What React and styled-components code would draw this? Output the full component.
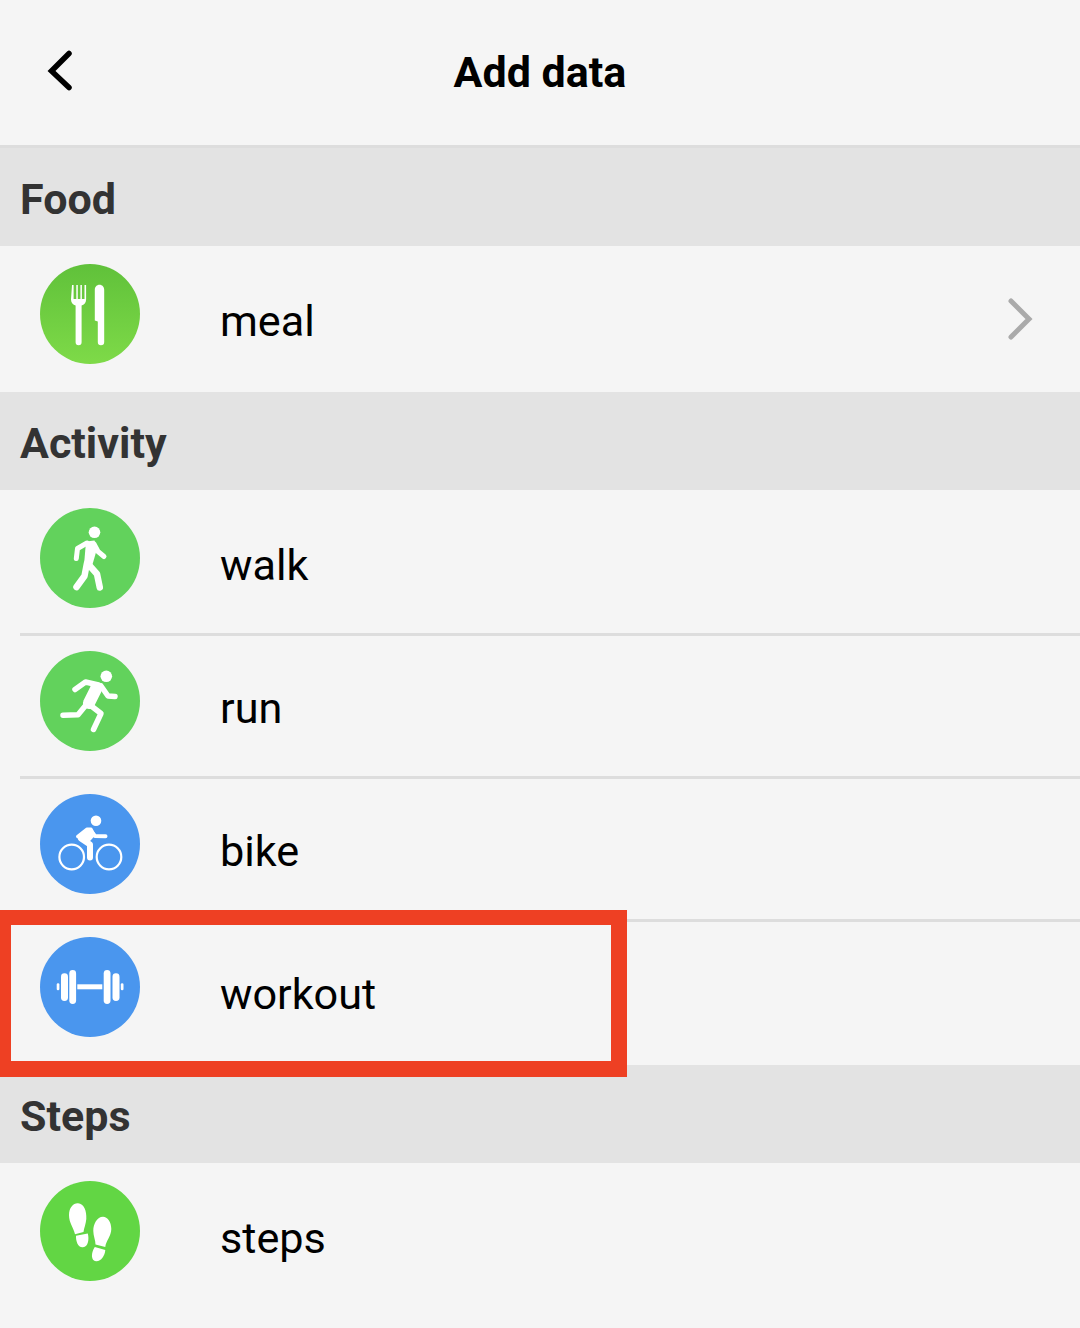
import React from "react";
import styled, { createGlobalStyle } from "styled-components";

const GlobalStyle = createGlobalStyle`
  html, body {
    margin: 0;
    padding: 0;
    background: #f5f5f5;
  }
  * {
    box-sizing: border-box;
  }
`;

const Page = styled.div`
  position: relative;
  width: 1080px;
  height: 1328px;
  overflow: hidden;
  background: #f5f5f5;
  font-family: Roboto, "Liberation Sans", sans-serif;
`;

const Header = styled.header`
  display: flex;
  align-items: center;
  justify-content: center;
  height: 148px;
  padding-bottom: 2px;
  border-bottom: 3px solid #dddddd;
  position: relative;
`;

const BackButton = styled.svg`
  position: absolute;
  left: 44px;
  top: 46px;
  width: 32px;
  height: 48px;
`;

const Title = styled.h1`
  margin: 0;
  font-size: 43px;
  font-weight: 700;
  color: #000;
`;

const SectionTitle = styled.h2`
  margin: 0;
  height: 98px;
  padding: 3px 0 0 20px;
  display: flex;
  align-items: center;
  font-size: 43px;
  font-weight: 700;
  color: #333;
  background: #e3e3e3;
`;

const Row = styled.div`
  display: flex;
  align-items: center;
  margin-left: 20px;
  height: ${(p) => p.$height}px;
  padding-left: 20px;
  padding-top: ${(p) => p.$top}px;
  padding-bottom: ${(p) => p.$bottom}px;
  border-bottom: ${(p) => (p.$divider ? "3px solid #dddddd" : "none")};
`;

const IconCircle = styled.div`
  flex: none;
  width: 100px;
  height: 100px;
  border-radius: 50%;
  background: ${(p) => p.$bg};
`;

const IconSvg = styled.svg`
  display: block;
  width: 100px;
  height: 100px;
`;

const Label = styled.span`
  margin-left: 80px;
  padding-top: 15px;
  font-size: 43.2px;
  font-weight: 400;
  color: #000;
`;

const Chevron = styled.svg`
  position: absolute;
  left: 1004px;
  top: 294px;
  width: 32px;
  height: 50px;
`;

const Highlight = styled.div`
  position: absolute;
  left: 0;
  top: 910px;
  width: 627px;
  height: 167px;
  border-style: solid;
  border-color: #ee4023;
  border-width: 15px 16px 16px 11px;
`;

function MealIcon() {
  return (
    <IconSvg viewBox="0 0 100 100">
      <path
        fill="#fff"
        d="M32 21h1.6v14h2.7V21h1.5v14h2.6V21h1.5v14h2.6V21h1.6v14.5c0 3.500-2 5.300-4.500 6V78.200a3 3 0 0 1-6 0V41.500c-2.500-.7-4.600-2.500-4.600-6z"
      />
      <path
        fill="#fff"
        d="M59.500 20.700c2.700 0 4.700 2.300 4.700 5V78a3.200 3.200 0 0 1-6.400 0V57.500l-3-1V25.700c0-2.700 2-5 4.700-5z"
      />
    </IconSvg>
  );
}

function WalkIcon() {
  return (
    <IconSvg viewBox="0 0 100 100">
      <circle cx="54.500" cy="24.300" r="5.800" fill="#fff" />
      <path fill="#fff" d="M46 33.500L54.500 32.500 57 41 52 58 44 57Z" />
      <g fill="none" stroke="#fff" strokeLinecap="round" strokeLinejoin="round">
        <path strokeWidth="5" d="M47 35L37.500 40.500l-1.200 10" />
        <path strokeWidth="5" d="M54 36L58 43.500l6 5" />
        <path strokeWidth="6.500" d="M47 55L44.500 68l-8 11" />
        <path strokeWidth="6.500" d="M49 57l8 9 2.800 13.500" />
      </g>
    </IconSvg>
  );
}

function RunIcon() {
  return (
    <IconSvg viewBox="0 0 100 100">
      <circle cx="66.300" cy="25.300" r="5.800" fill="#fff" />
      <g fill="none" stroke="#fff" strokeLinecap="round" strokeLinejoin="round">
        <path strokeWidth="5.500" d="M35 38.500l10.500-7.500 13 3" />
        <path strokeWidth="5.500" d="M61 35l7 10 7 .5" />
        <path strokeWidth="12" d="M56 38l-7 14" />
        <path strokeWidth="5.500" d="M46 54l-8 9.800-15 .4" />
        <path strokeWidth="5.500" d="M50 54l11 8.500-7.500 16" />
      </g>
    </IconSvg>
  );
}

function BikeIcon() {
  return (
    <IconSvg viewBox="0 0 100 100">
      <circle cx="56" cy="26.700" r="5.300" fill="#fff" />
      <circle cx="31.700" cy="63" r="12.300" fill="none" stroke="#fff" strokeWidth="2.200" />
      <circle cx="69" cy="63" r="12.300" fill="none" stroke="#fff" strokeWidth="2.200" />
      <path
        fill="#fff"
        stroke="#fff"
        strokeWidth="3"
        strokeLinejoin="round"
        d="M47 35L51 35 54 40.500 49 46 42 45.500 37.500 42.500Z"
      />
      <g fill="none" stroke="#fff" strokeLinecap="round" strokeLinejoin="round">
        <path strokeWidth="6" d="M41 44.500l9 6v13" />
        <path strokeWidth="4" d="M50 36l5 6 10.500 .2" />
      </g>
    </IconSvg>
  );
}

function WorkoutIcon() {
  return (
    <IconSvg viewBox="0 0 100 100">
      <g fill="#fff">
        <rect x="37.300" y="47.300" width="25" height="5" />
        <rect x="29.300" y="33" width="6.800" height="34" rx="3.400" />
        <rect x="63.700" y="33" width="6.800" height="34" rx="3.400" />
        <rect x="21" y="36.300" width="7" height="27.700" rx="3.400" />
        <rect x="72.500" y="36.300" width="7" height="27.700" rx="3.400" />
        <rect x="16.700" y="46.300" width="2.700" height="7" rx="1.300" />
        <rect x="80.800" y="46.300" width="2.700" height="7" rx="1.300" />
      </g>
    </IconSvg>
  );
}

function StepsIcon() {
  return (
    <IconSvg viewBox="0 0 100 100">
      <g fill="#fff">
        <path d="M29 34C29 26.500 33.500 22 38 22.300 44 22.800 46.800 30 46.300 38 45.900 43 44 47 43.500 51L35 53.300C33.500 46.500 29 42 29 34Z" />
        <path d="M36 54.800L47.800 52.500C49.300 58 48.300 65.800 43 66.300 37.800 66.800 35.800 60 36 54.800Z" />
        <path d="M71.300 48C71.300 41 67.500 35.800 63 35.800 57 35.800 53.300 43 53.300 50 53.300 55 55.500 59 55.500 63.500L65.300 66C65.800 60 71.300 55 71.300 48Z" />
        <path d="M54.800 66L65.300 69C64.800 75 61 80.500 56 80.200 50.800 79.800 50.800 72 54.800 66Z" />
      </g>
    </IconSvg>
  );
}

const sections = [
  {
    title: "Food",
    rows: [
      {
        label: "meal",
        icon: <MealIcon />,
        bg: "linear-gradient(180deg, #60c13a 0%, #7eda48 100%)",
        height: 146,
        top: 18,
        bottom: 28,
      },
    ],
  },
  {
    title: "Activity",
    rows: [
      { label: "walk", icon: <WalkIcon />, bg: "#62d25c", height: 146, top: 18, bottom: 25, divider: true },
      { label: "run", icon: <RunIcon />, bg: "#62d25c", height: 143, top: 15, bottom: 25, divider: true },
      { label: "bike", icon: <BikeIcon />, bg: "#4a96ee", height: 143, top: 15, bottom: 25, divider: true },
      { label: "workout", icon: <WorkoutIcon />, bg: "#4a96ee", height: 143, top: 15, bottom: 28 },
    ],
  },
  {
    title: "Steps",
    rows: [
      { label: "steps", icon: <StepsIcon />, bg: "#62d644", height: 165, top: 18, bottom: 47 },
    ],
  },
];

export default function App() {
  return (
    <Page>
      <GlobalStyle />
      <Header>
        <BackButton viewBox="0 0 32 48">
          <path
            d="M25 7.500L7.500 25 25 41.500"
            fill="none"
            stroke="#000"
            strokeWidth="5.500"
            strokeLinecap="round"
            strokeLinejoin="miter"
          />
        </BackButton>
        <Title>Add data</Title>
      </Header>
      {sections.map((section) => (
        <section key={section.title}>
          <SectionTitle>{section.title}</SectionTitle>
          {section.rows.map((row) => (
            <Row
              key={row.label}
              $height={row.height}
              $top={row.top}
              $bottom={row.bottom}
              $divider={row.divider}
            >
              <IconCircle $bg={row.bg}>{row.icon}</IconCircle>
              <Label>{row.label}</Label>
            </Row>
          ))}
        </section>
      ))}
      <Chevron viewBox="0 0 32 50">
        <path
          d="M7 7l18 18L7 43"
          fill="none"
          stroke="#aaaaaa"
          strokeWidth="5"
          strokeLinecap="round"
        />
      </Chevron>
      <Highlight />
    </Page>
  );
}
